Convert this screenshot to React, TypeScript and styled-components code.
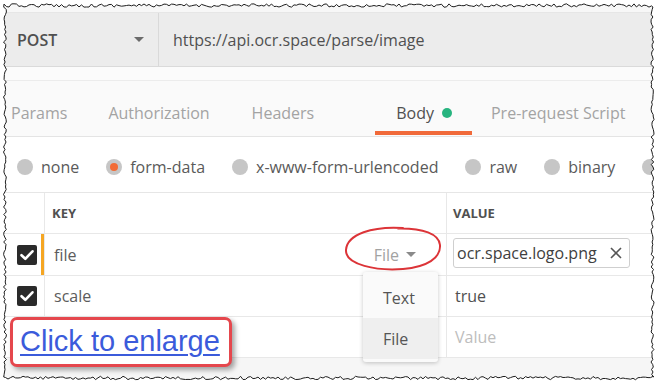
import React from "react";
import styled, { createGlobalStyle } from "styled-components";

const Global = createGlobalStyle`
  html, body { margin: 0; padding: 0; background: #ffffff; }
  * { box-sizing: border-box; }
`;

const Root = styled.div`
  position: relative;
  width: 660px;
  height: 385px;
  padding: 4px 0 0 4px;
  background: #ffffff;
  overflow: hidden;
`;

const Frame = styled.div`
  position: relative;
  width: 650px;
  height: 376px;
  overflow: hidden;
  background: #f6f6f6;
  display: flex;
  flex-direction: column;
  font-family: "Open Sans", "Noto Sans", sans-serif;
  color: #505050;
`;

const TopStrip = styled.div`
  height: 9px;
  flex: none;
  background: #f7f7f7;
  border-bottom: 1px solid #e6e6e6;
`;

const RequestBar = styled.div`
  height: 54px;
  flex: none;
  display: flex;
  background: #ececec;
  border-bottom: 1px solid #dadada;
`;

const MethodSelect = styled.div`
  width: 155px;
  flex: none;
  display: flex;
  align-items: center;
  justify-content: space-between;
  padding: 0 14px 0 13px;
  border-right: 1px solid #d9d9d9;
  font-size: 16px;
  font-weight: 600;
  color: #505050;
`;

const Caret = styled.span<{ $w?: number; $c?: string }>`
  display: inline-block;
  width: 0;
  height: 0;
  border-left: ${(p) => (p.$w ?? 10) / 2}px solid transparent;
  border-right: ${(p) => (p.$w ?? 10) / 2}px solid transparent;
  border-top: ${(p) => Math.round((p.$w ?? 10) / 2)}px solid ${(p) => p.$c ?? "#6a6a6a"};
`;

const UrlField = styled.div`
  flex: 1;
  display: flex;
  align-items: center;
  padding-left: 14px;
  font-size: 16px;
  color: #505050;
`;

const Spacer = styled.div`
  height: 14px;
  flex: none;
  background: #fbfbfb;
  border-bottom: 1px solid #ececec;
`;

const TabsRow = styled.div`
  height: 56px;
  flex: none;
  display: flex;
  align-items: stretch;
  background: #fafafa;
  border-bottom: 1px solid #e4e4e4;
  padding-left: 7px;
  overflow: hidden;
`;

const Tab = styled.div<{ $active?: boolean; $ml?: number }>`
  position: relative;
  display: flex;
  align-items: center;
  gap: 8px;
  margin-left: ${(p) => p.$ml ?? 0}px;
  padding: ${(p) => (p.$active ? "9px 20px 0 21px" : "9px 0 0 0")};
  font-size: 16px;
  color: ${(p) => (p.$active ? "#505050" : "#a3a3a3")};
  white-space: nowrap;
  flex: none;
  &::after {
    content: "";
    display: ${(p) => (p.$active ? "block" : "none")};
    position: absolute;
    left: 0;
    right: 0;
    bottom: 1px;
    height: 4px;
    background: #f16a3a;
  }
`;

const Dot = styled.span`
  width: 10px;
  height: 10px;
  border-radius: 50%;
  background: #27b47f;
`;

const RadioRow = styled.div`
  height: 56px;
  flex: none;
  display: flex;
  align-items: center;
  gap: 27px;
  padding: 5px 0 0 13px;
  background: #ffffff;
  border-bottom: 1px solid #e6e6e6;
  white-space: nowrap;
  overflow: hidden;
`;

const RadioItem = styled.div`
  display: flex;
  align-items: center;
  gap: 8px;
  font-size: 16px;
  color: #5a5a5a;
  flex: none;
`;

const RadioCircle = styled.span<{ $on?: boolean }>`
  width: 16px;
  height: 16px;
  border-radius: 50%;
  background: #c6c6c6;
  display: flex;
  align-items: center;
  justify-content: center;
  &::after {
    content: "";
    display: ${(p) => (p.$on ? "block" : "none")};
    width: 8px;
    height: 8px;
    border-radius: 50%;
    background: #f26b35;
  }
`;

const TableRow = styled.div<{ $h: number }>`
  height: ${(p) => p.$h}px;
  flex: none;
  display: flex;
  background: #ffffff;
  border-bottom: 1px solid #e8e8e8;
`;

const CheckCell = styled.div<{ $mark?: boolean }>`
  width: 41px;
  flex: none;
  display: flex;
  align-items: center;
  padding-left: 13px;
  border-right: 1px solid #e8e8e8;
  position: relative;
  &::after {
    content: "";
    display: ${(p) => (p.$mark ? "block" : "none")};
    position: absolute;
    right: 0;
    top: 0;
    bottom: 0;
    width: 3px;
    background: #f5a623;
  }
`;

const KeyCell = styled.div<{ $pl?: number }>`
  width: 402px;
  flex: none;
  position: relative;
  display: flex;
  align-items: center;
  justify-content: space-between;
  padding: 0 30px 0 ${(p) => p.$pl ?? 9}px;
  border-right: 1px solid #e8e8e8;
  font-size: 16px;
  color: #5c5c5c;
`;

const ValueCell = styled.div<{ $pl?: number; $top?: boolean }>`
  flex: 1;
  display: flex;
  align-items: ${(p) => (p.$top ? "flex-start" : "center")};
  padding-left: ${(p) => p.$pl ?? 8}px;
  padding-top: ${(p) => (p.$top ? 4 : 0)}px;
  font-size: 16px;
  color: #505050;
`;

const HeadLabel = styled.span`
  font-size: 13px;
  font-weight: 700;
  color: #505050;
`;

const TypeSelect = styled.div`
  display: flex;
  align-items: center;
  gap: 7px;
  color: #a2a2a2;
  font-size: 16px;
  position: relative;
`;

const FileInput = styled.div`
  width: 177px;
  height: 30px;
  display: flex;
  align-items: center;
  justify-content: space-between;
  padding: 0 7px 0 3px;
  border: 1px solid #cfcfcf;
  border-radius: 3px;
  font-size: 16px;
  color: #404040;
`;

const Placeholder = styled.span`
  color: #bdbdbd;
`;

const Menu = styled.div`
  position: absolute;
  right: 8px;
  top: 38px;
  width: 75px;
  padding: 5px 0 3px;
  background: #fafafa;
  border-radius: 3px;
  box-shadow: 0 1px 4px rgba(0, 0, 0, 0.22);
  z-index: 3;
  display: flex;
  flex-direction: column;
`;

const MenuItem = styled.div<{ $hover?: boolean }>`
  height: 41px;
  display: flex;
  align-items: center;
  padding-left: 20px;
  font-size: 16px;
  color: #555;
  background: ${(p) => (p.$hover ? "#efefef" : "transparent")};
`;

const Ellipse = styled.svg`
  position: absolute;
  left: -31px;
  top: -19px;
  overflow: visible;
  z-index: 2;
`;

const Footer = styled.div`
  flex: 1;
  background: #f6f6f6;
`;

const Enlarge = styled.a`
  position: absolute;
  left: 6px;
  top: 313px;
  width: 222px;
  height: 50px;
  display: flex;
  align-items: center;
  padding: 0 0 2px 7px;
  background: #ffffff;
  border: 3px solid #e5474d;
  border-radius: 7px;
  box-shadow: 3px 3px 5px rgba(0, 0, 0, 0.35);
  font-family: "Liberation Sans", Arial, sans-serif;
  font-size: 29px;
  color: #3b5bdb;
  text-decoration: underline;
  text-decoration-thickness: 2px;
  text-underline-offset: 3px;
  z-index: 4;
`;

const EdgeSvg = styled.svg`
  position: absolute;
  left: 0;
  top: 0;
  pointer-events: none;
  z-index: 10;
`;

function makeEdge(): string {
  let s = 12345;
  const r = () => {
    s = (s * 16807) % 2147483647;
    return (s - 1) / 2147483646;
  };
  const pts: [number, number][] = [];
  for (let x = 4; x <= 653; x += 2.5) pts.push([x, 5.5 + (r() - 0.5) * 3.4]);
  for (let y = 7; y <= 377; y += 2.5) pts.push([652.5 + (r() - 0.5) * 3, y]);
  for (let x = 653; x >= 4; x -= 2.5) pts.push([x, 378 + (r() - 0.5) * 3.4]);
  for (let y = 377; y >= 7; y -= 2.5) pts.push([5 + (r() - 0.5) * 3, y]);
  return "M" + pts.map((p) => `${p[0].toFixed(1)} ${p[1].toFixed(1)}`).join("L") + "Z";
}

const edge = makeEdge();

function CheckBox() {
  return (
    <svg width="20" height="20" viewBox="0 0 20 20">
      <rect x="0" y="0" width="20" height="20" rx="2" fill="#2a2a2a" />
      <path d="M4.5 10.2 L8.3 13.8 L15.5 6.3" fill="none" stroke="#fff" strokeWidth="2.6" strokeLinecap="round" strokeLinejoin="round" />
    </svg>
  );
}

export default function App() {
  return (
    <Root>
      <Global />
      <Frame>
        <TopStrip />
        <RequestBar>
          <MethodSelect>
            <span>POST</span>
            <Caret $w={10} $c="#6b6b6b" />
          </MethodSelect>
          <UrlField>https://api.ocr.space/parse/image</UrlField>
        </RequestBar>
        <Spacer />
        <TabsRow>
          <Tab>Params</Tab>
          <Tab $ml={41}>Authorization</Tab>
          <Tab $ml={42}>Headers</Tab>
          <Tab $ml={61} $active>
            Body <Dot />
          </Tab>
          <Tab $ml={19}>Pre-request Script</Tab>
        </TabsRow>
        <RadioRow>
          <RadioItem><RadioCircle />none</RadioItem>
          <RadioItem><RadioCircle $on />form-data</RadioItem>
          <RadioItem><RadioCircle />x-www-form-urlencoded</RadioItem>
          <RadioItem><RadioCircle />raw</RadioItem>
          <RadioItem><RadioCircle />binary</RadioItem>
          <RadioItem><RadioCircle /></RadioItem>
        </RadioRow>
        <TableRow $h={41}>
          <CheckCell />
          <KeyCell $pl={7}>
            <HeadLabel>KEY</HeadLabel>
          </KeyCell>
          <ValueCell $pl={6}>
            <HeadLabel>VALUE</HeadLabel>
          </ValueCell>
        </TableRow>
        <TableRow $h={42}>
          <CheckCell $mark>
            <CheckBox />
          </CheckCell>
          <KeyCell>
            <span>file</span>
            <TypeSelect>
              <Ellipse width="100" height="48" viewBox="0 0 100 48">
                <path
                  d="M60 3 C30 1 4 9 3 25 C2 40 34 46 60 44 C84 42 98 33 97 20 C96 9 80 3 55 3.5"
                  fill="none"
                  stroke="#dc3438"
                  strokeWidth="2"
                  strokeLinecap="round"
                />
              </Ellipse>
              <span>File</span>
              <Caret $w={10} $c="#8a8a8a" />
            </TypeSelect>
            <Menu>
              <MenuItem>Text</MenuItem>
              <MenuItem $hover>File</MenuItem>
            </Menu>
          </KeyCell>
          <ValueCell $pl={6} $top>
            <FileInput>
              <span>ocr.space.logo.png</span>
              <svg width="12" height="12" viewBox="0 0 12 12">
                <path d="M1 1 L11 11 M11 1 L1 11" stroke="#555" strokeWidth="1.6" />
              </svg>
            </FileInput>
          </ValueCell>
        </TableRow>
        <TableRow $h={41}>
          <CheckCell>
            <CheckBox />
          </CheckCell>
          <KeyCell>
            <span>scale</span>
          </KeyCell>
          <ValueCell>true</ValueCell>
        </TableRow>
        <TableRow $h={41}>
          <CheckCell />
          <KeyCell />
          <ValueCell>
            <Placeholder>Value</Placeholder>
          </ValueCell>
        </TableRow>
        <Footer />
        <Enlarge href="#">Click to enlarge</Enlarge>
      </Frame>
      <EdgeSvg width="660" height="385" viewBox="0 0 660 385">
        <path d={"M0 0H660V385H0Z" + edge} fill="#ffffff" fillRule="evenodd" />
        <path d={edge} fill="none" stroke="#1e1e1e" strokeWidth="1" />
      </EdgeSvg>
    </Root>
  );
}
